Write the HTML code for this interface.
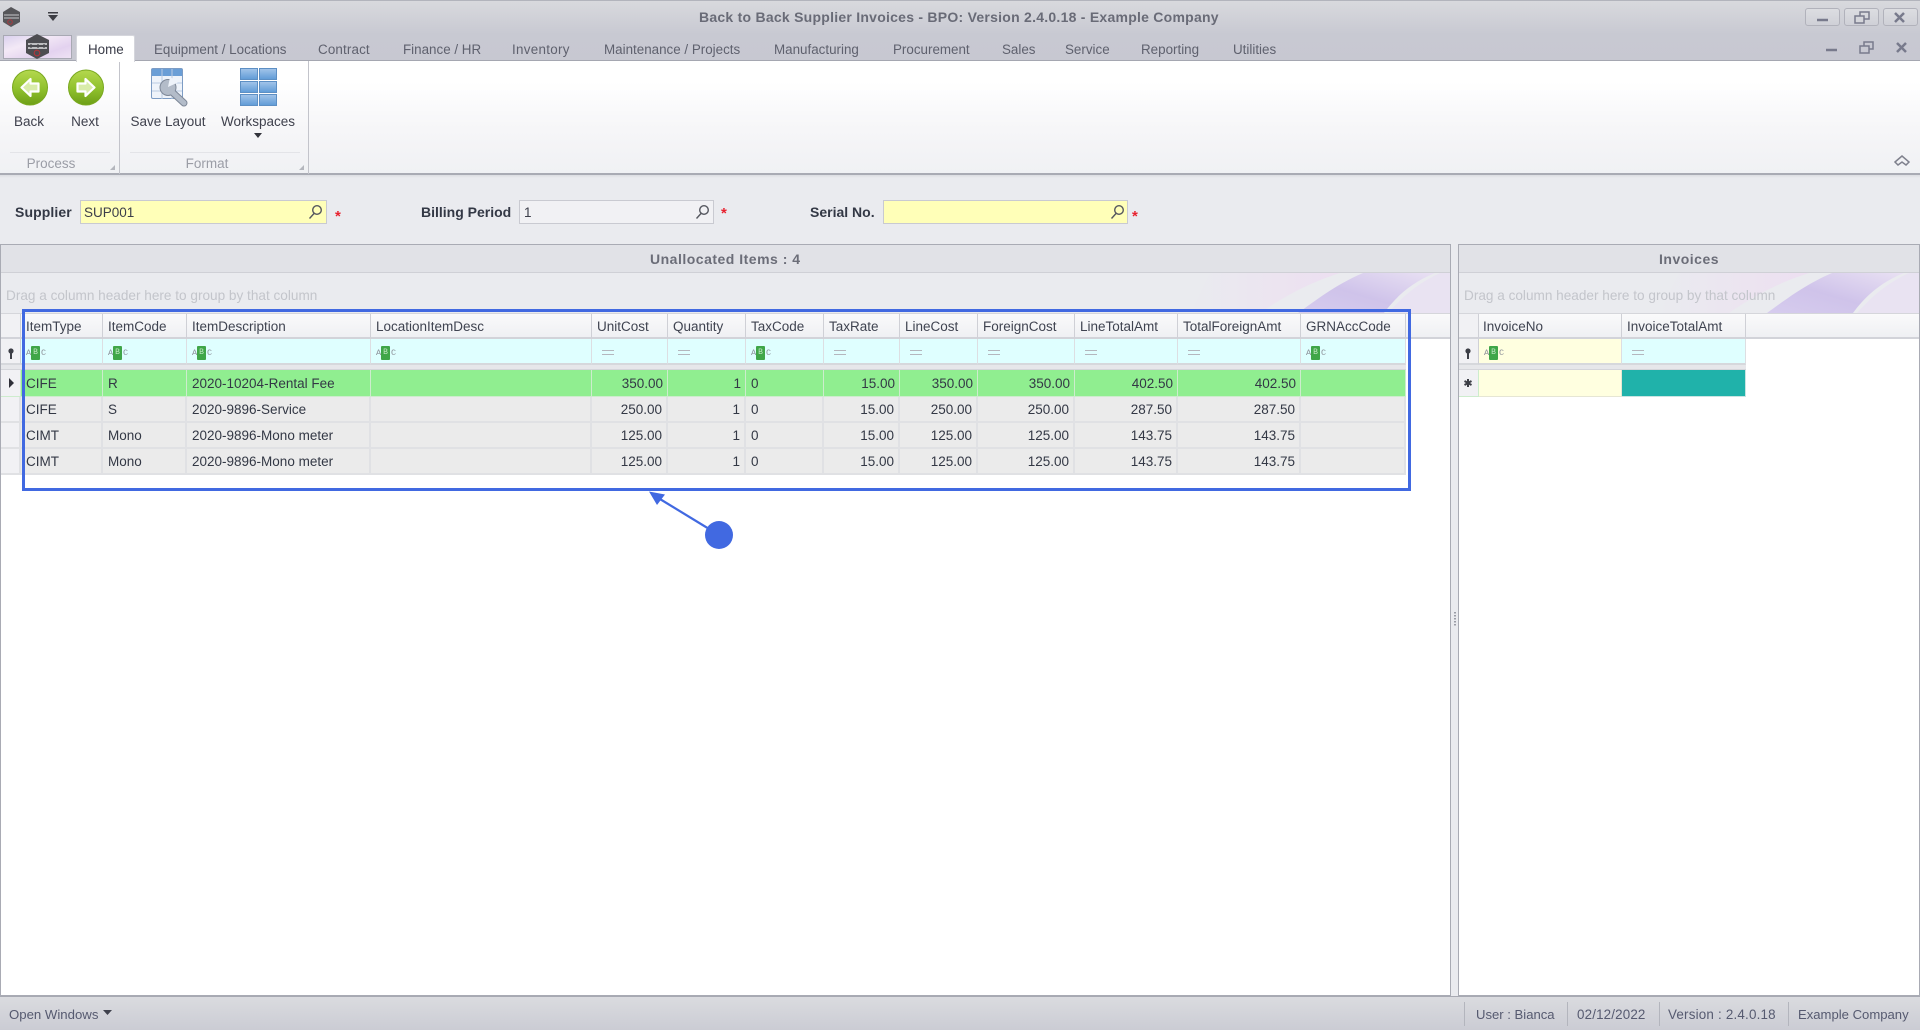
<!DOCTYPE html>
<html><head><meta charset="utf-8"><title>Back to Back Supplier Invoices</title>
<style>
*{box-sizing:border-box}
html,body{margin:0;padding:0;width:1920px;height:1030px;overflow:hidden;background:#eaebef}
body{font-family:"Liberation Sans",sans-serif;font-size:13px;color:#3c3e4a}
#w{position:relative;width:1920px;height:1030px;overflow:hidden;filter:blur(.35px)}
.a{position:absolute}
.t{position:absolute;white-space:nowrap;line-height:20px;height:20px}
.tab{color:#5f616e;font-size:13.4px;top:39.5px}
.rb{color:#3f414d;font-size:13.5px;top:112px;text-align:center;width:100px}
.gl{color:#9b9da6;font-size:13.5px;top:154px;text-align:center;width:80px}
.lb{font-weight:bold;font-size:14px;color:#333845;top:202px}
.inp{position:absolute;top:200px;height:24px;border:1px solid #c9cad1}
.ast{position:absolute;color:#e8212e;font-weight:bold;font-size:15px;line-height:16px}
.cap{font-weight:bold;font-size:14px;color:#6b6d78;top:249px;letter-spacing:.5px}
.grp{color:#c3c5cb;font-size:13.6px;top:285.5px}
.st{color:#565a70;font-size:13.4px;top:1004.5px}
.sep{position:absolute;top:1002px;height:24px;width:1px;background:#b3b5bd}
table{position:absolute;border-collapse:separate;border-spacing:0;table-layout:fixed;font-size:13.5px;color:#333845}
td{padding:0 4px 0 5px;border-right:1px solid #dddee2;border-bottom:1px solid #dddee2;white-space:nowrap;overflow:hidden;line-height:18px;vertical-align:middle}
tr.h td{background:linear-gradient(#fafafb,#eff0f3);border-right:1px solid #cfd0d6;border-bottom:2px solid #d2d3d9;height:25px;color:#3f4350;padding-top:2px}
tr.f td{background:#dfffff;height:26px;border-bottom:2px solid #d6d8dc;padding-top:3px}
tr.g td{background:#e6e7ea;height:5px;padding:0;border:0;line-height:0;font-size:0;border-bottom:1px solid #d4d5da}
tr.s td{background:#90ee90;height:27px;border-color:#cdeccd;padding-top:1px}
tr.n td{background:#ebebeb;height:26px;border-bottom:2px solid #e0e1e4;border-right:2px solid #e0e1e4;padding-top:1px}
td.r{text-align:right}
td.i{background:#f1f1f4!important;padding:0;border-right:1px solid #cfd0d6}
.abc{display:inline-block;position:relative;width:24px;height:14px;vertical-align:middle;font-size:8.5px;line-height:14px;color:#8b8f98;font-family:"Liberation Mono",monospace}
.abc b{position:absolute;left:5px;top:0;width:9px;height:14px;background:#3fa648;color:#bfe6c2;text-align:center;border-radius:1px;font-weight:normal;font-size:8px}
.abc i{position:absolute;top:0;font-style:normal}
.eq{display:inline-block;width:12px;height:5px;border-top:1.5px solid #b4b6bd;border-bottom:1.5px solid #b4b6bd;vertical-align:middle;margin-left:5px}
</style></head><body><div id="w">

<!-- title / tab bar -->
<div class="a" style="left:0;top:0;width:1920px;height:61px;background:linear-gradient(#d8d9dd,#c8c9d2 55%,#c7c8d1);border-top:1px solid #b2b4bc"></div>
<div class="a" style="left:0;top:60px;width:1920px;height:1px;background:#a5a7b1"></div>
<svg class="a" style="left:0;top:0" width="90" height="62" viewBox="0 0 90 62">
<polygon points="11,7 20,12 20,22 11,27 3,22 3,12" fill="#56565a"/>
<path d="M4 15h15M4 18h15" stroke="#b0b0b4" stroke-width="1.2"/><circle cx="10" cy="22" r="2.3" fill="none" stroke="#a83a40" stroke-width="1"/>
<rect x="48" y="12" width="10" height="1.500" fill="#3d3d44"/><polygon points="48,15 58,15 53,21" fill="#3d3d44"/>
<defs><linearGradient id="ab" x1="0" y1="0" x2="1" y2="1"><stop offset="0" stop-color="#d9d0ee"/><stop offset=".35" stop-color="#f3e9f6"/><stop offset=".7" stop-color="#e3d2ef"/><stop offset="1" stop-color="#efe3f5"/></linearGradient></defs>
<rect x="3.500" y="35.500" width="68" height="23" fill="url(#ab)" stroke="#a8a9b3"/>
<polygon points="37,34 49,40 49,53 37,59 26,53 26,40" fill="#4d4d51"/>
<path d="M28 44h19M28 48h19" stroke="#e4e4e6" stroke-width="1.600"/><path d="M31 44v4M38 44v4M44 44v4" stroke="#4d4d51" stroke-width="1.200"/>
<circle cx="37" cy="53" r="2.800" fill="none" stroke="#b3343a" stroke-width="1.100"/>
</svg>
<div class="t" style="left:699px;top:7px;font-weight:bold;font-size:14px;color:#696b77;letter-spacing:.25px">Back to Back Supplier Invoices - BPO: Version 2.4.0.18 - Example Company</div>

<!-- window buttons -->
<div class="a" style="left:1805px;top:8px;width:35px;height:18px;border:1px solid #b1b2bb;border-radius:3px;background:linear-gradient(#dcdde1,#cfd0d7)"></div>
<div class="a" style="left:1844px;top:8px;width:35px;height:18px;border:1px solid #b1b2bb;border-radius:3px;background:linear-gradient(#dcdde1,#cfd0d7)"></div>
<div class="a" style="left:1883px;top:8px;width:35px;height:18px;border:1px solid #b1b2bb;border-radius:3px;background:linear-gradient(#dcdde1,#cfd0d7)"></div>
<svg class="a" style="left:1800px;top:0" width="120" height="60" viewBox="0 0 120 60" fill="none" stroke="#787a8c">
<path d="M17 20h11" stroke-width="2.500"/>
<rect x="60" y="12" width="9" height="7" stroke-width="1.500"/><rect x="55" y="16" width="9" height="7" stroke-width="1.500" fill="#d5d6db"/>
<path d="M95 13l9 9M104 13l-9 9" stroke-width="2.500"/>
<path d="M26 50h11" stroke-width="2.500"/>
<rect x="64" y="42" width="9" height="7" stroke-width="1.500"/><rect x="60" y="46" width="9" height="7" stroke-width="1.500" fill="#c8c9d2"/>
<path d="M97 43l9 9M106 43l-9 9" stroke-width="2.500"/>
</svg>

<!-- ribbon -->
<div class="a" style="left:0;top:61px;width:1920px;height:113px;background:linear-gradient(#fff 0,#fff 18%,#f6f6f8 60%,#f0f1f4 100%)"></div>
<div class="a" style="left:0;top:173px;width:1920px;height:2px;background:#a9abb4"></div>
<div class="a" style="left:0;top:175px;width:1920px;height:3px;background:linear-gradient(#dcdde2,#eaebef)"></div>
<div class="a" style="left:119px;top:61px;width:1px;height:113px;background:#c3c4cb"></div>
<div class="a" style="left:308px;top:61px;width:1px;height:113px;background:#c3c4cb"></div>
<div class="a" style="left:10px;top:152px;width:100px;height:1px;background:#e3e4e8"></div>
<div class="a" style="left:130px;top:152px;width:170px;height:1px;background:#e3e4e8"></div>

<!-- tabs -->
<div class="a" style="left:76px;top:35px;width:59px;height:27px;background:#fff;border-radius:2px 2px 0 0;border:1px solid #d5d6dc;border-bottom:0"></div>
<div class="t tab" style="left:88px;color:#3a3c48">Home</div>
<div class="t tab" style="left:154px">Equipment / Locations</div>
<div class="t tab" style="left:318px;letter-spacing:.15px">Contract</div>
<div class="t tab" style="left:403px">Finance / HR</div>
<div class="t tab" style="left:512px;letter-spacing:.3px">Inventory</div>
<div class="t tab" style="left:604px">Maintenance / Projects</div>
<div class="t tab" style="left:774px">Manufacturing</div>
<div class="t tab" style="left:893px">Procurement</div>
<div class="t tab" style="left:1002px">Sales</div>
<div class="t tab" style="left:1065px">Service</div>
<div class="t tab" style="left:1141px">Reporting</div>
<div class="t tab" style="left:1233px">Utilities</div>

<!-- ribbon icons -->
<svg class="a" style="left:0;top:62px" width="320" height="112" viewBox="0 62 320 112">
<defs>
<linearGradient id="gr" x1="0" y1="0" x2="0" y2="1"><stop offset="0" stop-color="#b4d84e"/><stop offset=".55" stop-color="#8fc02c"/><stop offset="1" stop-color="#6d9f16"/></linearGradient>
<linearGradient id="bl" x1="0" y1="0" x2="0" y2="1"><stop offset="0" stop-color="#a4c5ea"/><stop offset="1" stop-color="#5f9bd6"/></linearGradient>
</defs>
<circle cx="30" cy="87.500" r="17.500" fill="url(#gr)" stroke="#79a81f"/>
<path d="M21.500 87.500L30.500 79v4.500h8v8h-8V96z" fill="#d9ecaa" stroke="#fff" stroke-width="2.200" stroke-linejoin="round"/>
<circle cx="86" cy="87.500" r="17.500" fill="url(#gr)" stroke="#79a81f"/>
<path d="M94.500 87.500L85.500 79v4.500h-8v8h8V96z" fill="#d9ecaa" stroke="#fff" stroke-width="2.200" stroke-linejoin="round"/>
<!-- save layout -->
<rect x="151.500" y="68.500" width="31" height="30" rx="1.500" fill="#eef3fa" stroke="#7d9cc4"/>
<rect x="152" y="69" width="30" height="7" fill="#6a9ed6"/>
<path d="M162 69v30M172 69v30M152 83h30M152 91h30" stroke="#b9cbe2" fill="none"/>
<path d="M171 91L184 103" stroke="#7d8797" stroke-width="7" stroke-linecap="round" fill="none"/>
<circle cx="168" cy="87.500" r="8.500" fill="#7d8797"/>
<path d="M171 91L184 103" stroke="#b3bcc9" stroke-width="5" stroke-linecap="round" fill="none"/>
<circle cx="168" cy="87.500" r="7.500" fill="#b3bcc9"/>
<polygon points="168,87 170,77 179,82" fill="#eef3fa"/>
<!-- workspaces -->
<g fill="url(#bl)" stroke="#5d8fc4">
<rect x="240.500" y="68.500" width="17" height="11"/><rect x="259.500" y="68.500" width="17" height="11"/>
<rect x="240.500" y="81.500" width="17" height="11"/><rect x="259.500" y="81.500" width="17" height="11"/>
<rect x="240.500" y="94.500" width="17" height="11"/><rect x="259.500" y="94.500" width="17" height="11"/>
</g>
<polygon points="254,133 262,133 258,138" fill="#33343c"/>
<polygon points="115,165 115,170 110,170" fill="#b4b6bd"/>
<polygon points="304,165 304,170 299,170" fill="#b4b6bd"/>
</svg>
<div class="t rb" style="left:-21px">Back</div>
<div class="t rb" style="left:35px">Next</div>
<div class="t rb" style="left:118px">Save Layout</div>
<div class="t rb" style="left:208px">Workspaces</div>
<div class="t gl" style="left:11px">Process</div>
<div class="t gl" style="left:167px">Format</div>
<svg class="a" style="left:1892px;top:153px" width="20" height="16" viewBox="0 0 20 16" fill="none" stroke="#7f818d" stroke-width="1.500"><path d="M3 9l7-6 7 6-3 3-4-3-4 3z"/></svg>

<!-- form -->
<div class="t lb" style="left:15px;letter-spacing:.1px">Supplier</div>
<div class="inp" style="left:80px;width:247px;background:#ffffb8"></div>
<div class="t" style="left:84px;top:203px;font-size:13.5px;color:#3c3e4a">SUP001</div>
<div class="ast" style="left:335px;top:209px">*</div>
<div class="t lb" style="left:421px">Billing Period</div>
<div class="inp" style="left:519px;width:195px;background:#f1f1f4"></div>
<div class="t" style="left:524px;top:203px;font-size:13.5px;color:#3c3e4a">1</div>
<div class="ast" style="left:721px;top:206px">*</div>
<div class="t lb" style="left:810px">Serial No.</div>
<div class="inp" style="left:883px;width:245px;background:#ffffb8"></div>
<div class="ast" style="left:1132px;top:209px">*</div>
<svg class="a" style="left:0;top:195px" width="1130" height="34" viewBox="0 195 1130 34" fill="none" stroke="#55575f" stroke-width="1.400">
<circle cx="317" cy="210" r="4.300"/><path d="M314 213.500l-4.500 5"/>
<circle cx="704" cy="210" r="4.300"/><path d="M701 213.500l-4.500 5"/>
<circle cx="1119" cy="210" r="4.300"/><path d="M1116 213.500l-4.500 5"/>
</svg>

<!-- panels -->
<div class="a" style="left:0;top:244px;width:1451px;height:752px;background:#fff;border:1px solid #a9abb4"></div>
<div class="a" style="left:1458px;top:244px;width:462px;height:752px;background:#fff;border:1px solid #a9abb4"></div>
<div class="a" style="left:1px;top:245px;width:1449px;height:28px;background:#e1e2e7;border-bottom:1px solid #cfd0d6"></div>
<div class="a" style="left:1459px;top:245px;width:460px;height:28px;background:#e1e2e7;border-bottom:1px solid #cfd0d6"></div>
<div class="a" style="left:1px;top:273px;width:1449px;height:41px;background:#eaebef;border-bottom:1px solid #d5d6db"></div>
<div class="a" style="left:1459px;top:273px;width:460px;height:41px;background:#eaebef;border-bottom:1px solid #d5d6db"></div>
<div class="t cap" style="left:650px">Unallocated Items : 4</div>
<div class="t cap" style="left:1659px">Invoices</div>

<svg width="0" height="0" style="position:absolute"><defs>
<linearGradient id="s1" x1="0" y1="1" x2="1" y2="0"><stop offset="0" stop-color="#d6ccee"/><stop offset=".45" stop-color="#cfc3ea"/><stop offset="1" stop-color="#e9e1f3"/></linearGradient>
<linearGradient id="s2" x1="0" y1="0" x2="1" y2="0"><stop offset="0" stop-color="#eaebef"/><stop offset=".35" stop-color="#ebe7f0"/><stop offset="1" stop-color="#eddff1"/></linearGradient>
</defs></svg>
<svg class="a" style="left:1190px;top:273px" width="260" height="40" viewBox="0 0 260 40">
<path d="M20 0H150C118 10 92 25 70 40H0Z" fill="url(#s2)"/>
<path d="M108 40C125 28 145 12 173 0H245C220 10 205 25 194 40Z" fill="url(#s1)"/>
<path d="M198 40C212 24 228 10 250 0H260V40Z" fill="#e9e3f2"/>
</svg>
<svg class="a" style="left:1659px;top:273px" width="260" height="40" viewBox="0 0 260 40">
<path d="M20 0H150C118 10 92 25 70 40H0Z" fill="url(#s2)"/>
<path d="M108 40C125 28 145 12 173 0H245C220 10 205 25 194 40Z" fill="url(#s1)"/>
<path d="M198 40C212 24 228 10 250 0H260V40Z" fill="#e9e3f2"/>
</svg>
<div class="t grp" style="left:6px">Drag a column header here to group by that column</div>
<div class="t grp" style="left:1464px">Drag a column header here to group by that column</div>

<!-- header strips -->
<div class="a" style="left:1px;top:314px;width:1449px;height:25px;background:linear-gradient(#fafafb,#eff0f3);border-bottom:2px solid #d2d3d9"></div>
<div class="a" style="left:1459px;top:314px;width:460px;height:25px;background:linear-gradient(#fafafb,#eff0f3);border-bottom:2px solid #d2d3d9"></div>

<!-- main grid -->
<table style="left:1px;top:314px;width:1405px">
<colgroup><col style="width:20px"><col style="width:82px"><col style="width:84px"><col style="width:184px"><col style="width:221px"><col style="width:76px"><col style="width:78px"><col style="width:78px"><col style="width:76px"><col style="width:78px"><col style="width:97px"><col style="width:103px"><col style="width:123px"><col style="width:105px"></colgroup>
<tr class="h"><td class="i"></td><td>ItemType</td><td>ItemCode</td><td>ItemDescription</td><td>LocationItemDesc</td><td>UnitCost</td><td>Quantity</td><td>TaxCode</td><td>TaxRate</td><td>LineCost</td><td>ForeignCost</td><td>LineTotalAmt</td><td>TotalForeignAmt</td><td>GRNAccCode</td></tr>
<tr class="f"><td class="i"></td>
<td><span class="abc"><i style="left:0">A</i><b>B</b><i style="left:15px">C</i></span></td>
<td><span class="abc"><i style="left:0">A</i><b>B</b><i style="left:15px">C</i></span></td>
<td><span class="abc"><i style="left:0">A</i><b>B</b><i style="left:15px">C</i></span></td>
<td><span class="abc"><i style="left:0">A</i><b>B</b><i style="left:15px">C</i></span></td>
<td><span class="eq"></span></td><td><span class="eq"></span></td>
<td><span class="abc"><i style="left:0">A</i><b>B</b><i style="left:15px">C</i></span></td>
<td><span class="eq"></span></td><td><span class="eq"></span></td><td><span class="eq"></span></td><td><span class="eq"></span></td><td><span class="eq"></span></td>
<td><span class="abc"><i style="left:0">A</i><b>B</b><i style="left:15px">C</i></span></td></tr>
<tr class="g"><td colspan="14"></td></tr>
<tr class="s"><td class="i"></td><td>CIFE</td><td>R</td><td>2020-10204-Rental Fee</td><td></td><td class="r">350.00</td><td class="r">1</td><td>0</td><td class="r">15.00</td><td class="r">350.00</td><td class="r">350.00</td><td class="r">402.50</td><td class="r">402.50</td><td></td></tr>
<tr class="n"><td class="i"></td><td>CIFE</td><td>S</td><td>2020-9896-Service</td><td></td><td class="r">250.00</td><td class="r">1</td><td>0</td><td class="r">15.00</td><td class="r">250.00</td><td class="r">250.00</td><td class="r">287.50</td><td class="r">287.50</td><td></td></tr>
<tr class="n"><td class="i"></td><td>CIMT</td><td>Mono</td><td>2020-9896-Mono meter</td><td></td><td class="r">125.00</td><td class="r">1</td><td>0</td><td class="r">15.00</td><td class="r">125.00</td><td class="r">125.00</td><td class="r">143.75</td><td class="r">143.75</td><td></td></tr>
<tr class="n"><td class="i"></td><td>CIMT</td><td>Mono</td><td>2020-9896-Mono meter</td><td></td><td class="r">125.00</td><td class="r">1</td><td>0</td><td class="r">15.00</td><td class="r">125.00</td><td class="r">125.00</td><td class="r">143.75</td><td class="r">143.75</td><td></td></tr>
</table>

<!-- invoices grid -->
<table style="left:1459px;top:314px;width:287px">
<colgroup><col style="width:20px"><col style="width:143px"><col style="width:124px"></colgroup>
<tr class="h"><td class="i"></td><td style="padding-left:4px">InvoiceNo</td><td>InvoiceTotalAmt</td></tr>
<tr class="f"><td class="i"></td><td style="background:#ffffe0"><span class="abc"><i style="left:0">A</i><b>B</b><i style="left:15px">C</i></span></td><td><span class="eq"></span></td></tr>
<tr class="g"><td colspan="3"></td></tr>
<tr class="s"><td class="i"></td><td style="background:#ffffe0;border-color:#e6e6d4"></td><td style="background:#20b2aa;border-color:#c9e4e2"></td></tr>
</table>

<!-- indicators -->
<svg class="a" style="left:0;top:340px" width="1480" height="56" viewBox="0 340 1480 56">
<circle cx="11" cy="351" r="2.600" fill="#3c3e46"/><rect x="10" y="352" width="2" height="7" fill="#3c3e46"/>
<polygon points="9,378 9,388 14,383" fill="#2f3038"/>
<circle cx="1468" cy="351" r="2.600" fill="#3c3e46"/><rect x="1467" y="352" width="2" height="7" fill="#3c3e46"/>
<path d="M1468 379v8M1464.500 381l7 4M1471.500 381l-7 4" stroke="#3c3e46" stroke-width="2"/>
</svg>
<div class="a" style="left:1454px;top:612px;width:2px;height:14px;background-image:linear-gradient(#9a9ca6 50%,transparent 50%);background-size:2px 3px"></div>

<!-- annotation -->
<div class="a" style="left:22px;top:309px;width:1389px;height:182px;border:3px solid #4169e1"></div>
<svg class="a" style="left:640px;top:480px" width="110" height="72" viewBox="640 480 110 72">
<path d="M719 535L655 496" stroke="#4169e1" stroke-width="2.200" fill="none"/>
<polygon points="649,491.500 665,494.500 657,505" fill="#4169e1"/>
<circle cx="719" cy="535" r="14" fill="#4169e1"/>
</svg>

<!-- status bar -->
<div class="a" style="left:0;top:996px;width:1920px;height:34px;background:linear-gradient(#dadbdf,#cbccd4);border-top:1px solid #a7a9b2"></div>
<div class="t st" style="left:9px;font-size:13.2px">Open Windows</div>
<svg class="a" style="left:103px;top:1010px" width="10" height="6"><polygon points="0,0 9,0 4.500,5" fill="#3f414d"/></svg>
<div class="sep" style="left:1464px"></div><div class="sep" style="left:1567px"></div><div class="sep" style="left:1659px"></div><div class="sep" style="left:1788px"></div>
<div class="t st" style="left:1476px;font-size:13.1px">User : Bianca</div>
<div class="t st" style="left:1577px;letter-spacing:.15px">02/12/2022</div>
<div class="t st" style="left:1668px;letter-spacing:.2px">Version : 2.4.0.18</div>
<div class="t st" style="left:1798px;font-size:13.1px">Example Company</div>

</div></body></html>
